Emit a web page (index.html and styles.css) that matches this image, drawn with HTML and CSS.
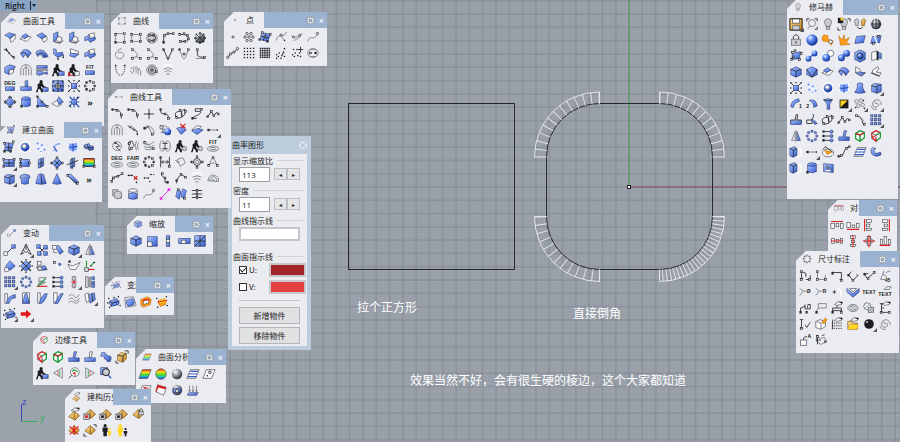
FILE: index.html
```
<!DOCTYPE html>
<html lang="zh-CN">
<head>
    <meta charset="UTF-8">
    <meta name="viewport" content="width=device-width, initial-scale=1.0">
    <title>Right</title>
    <link rel="stylesheet" href="styles.css">
</head>
<body>
    <main class="viewport">
        <svg class="drawing" aria-hidden="true">
            <defs>
                <pattern id="fine" x="629" y="187" width="2.66" height="2.66" patternUnits="userSpaceOnUse">
                    <path class="grid-fine" d="M0 0H2.66M0 0V2.66"/>
                </pattern>
                <pattern id="coarse" x="622.35" y="180.35" width="13.3" height="13.3" patternUnits="userSpaceOnUse">
                    <path class="grid-coarse" d="M0 6.65H13.3M6.65 0V13.3"/>
                </pattern>
                <linearGradient id="blue" x1="0" y1="0" x2="1" y2="1">
                    <stop offset="0" stop-color="#b4c8ff"/>
                    <stop offset="0.5" stop-color="#6c90ee"/>
                    <stop offset="1" stop-color="#3456be"/>
                </linearGradient>
                <radialGradient id="ball" cx="0.35" cy="0.3" r="0.7">
                    <stop offset="0" stop-color="#eef4ff"/>
                    <stop offset="0.4" stop-color="#5c8cf5"/>
                    <stop offset="1" stop-color="#123296"/>
                </radialGradient>
                <radialGradient id="steel" cx="0.35" cy="0.3" r="0.7">
                    <stop offset="0" stop-color="#ffffff"/>
                    <stop offset="0.5" stop-color="#9299a4"/>
                    <stop offset="1" stop-color="#30353d"/>
                </radialGradient>
                <linearGradient id="rainbow" x1="0" y1="0" x2="0" y2="1">
                    <stop offset="0" stop-color="#f02010"/>
                    <stop offset="0.3" stop-color="#ffe020"/>
                    <stop offset="0.55" stop-color="#58d820"/>
                    <stop offset="0.75" stop-color="#20c8b0"/>
                    <stop offset="1" stop-color="#2b3cff"/>
                </linearGradient>
                <linearGradient id="gold" x1="0" y1="0" x2="1" y2="1">
                    <stop offset="0" stop-color="#ffe49a"/>
                    <stop offset="1" stop-color="#c07a10"/>
                </linearGradient>
            </defs>
            <rect x="95" y="0" width="100%" height="100%" fill="url(#fine)"/>
            <rect x="95" y="0" width="100%" height="100%" fill="url(#coarse)"/>
            <path class="axis-x" d="M629 187H2000"/>
            <path class="axis-z" d="M629 187V0"/>
            <rect class="curve" x="348.5" y="103.5" width="166" height="166"/>
            <rect class="curve" x="546.5" y="103.5" width="166" height="166" rx="53"/>
            <!-- curvature combs, one per rounded corner -->
            <g class="comb">
                <path d="M599.5 103.5V92A65 65 0 0 0 534.5 157H546.5M659.5 103.5V92A65 65 0 0 1 724.5 157H712.5M546.5 216.5H534.5A65 65 0 0 0 599.5 281.5V269.5M712.5 216.5H724.5A65 65 0 0 1 659.5 281.5V269.5"/>
                <path class="hairs" pathLength="12" d="M599.5 98A59 59 0 0 0 540.5 157"/>
                <path class="hairs" pathLength="12" d="M659.5 98A59 59 0 0 1 718.5 157"/>
                <path class="hairs" pathLength="12" d="M540.5 216.5A59 59 0 0 0 599.5 275.5"/>
                <path class="hairs hairs-dense" pathLength="24" d="M718.5 216.5A59 59 0 0 1 659.5 275.5"/>
            </g>
            <rect class="origin" x="627.5" y="185.5" width="3" height="3"/>
            <path class="ucs-z" d="M21.5 421V404"/>
            <path class="ucs-y" d="M21 421.5H38"/>
            <text class="ucs-label ucs-z-label" x="22" y="405">z</text>
            <text class="ucs-label ucs-y-label" x="40" y="421">y</text>
        </svg>

        <button class="view-name" type="button">Right<span class="view-menu"></span></button>

        <p class="note note-square">拉个正方形</p>
        <p class="note note-fillet">直接倒角</p>
        <p class="note note-result">效果当然不好，会有很生硬的棱边，这个大家都知道</p>

        <form class="dialog">
            <header class="dialog-title">
                <h2>曲率图形</h2>
                <button class="dialog-close" type="button" aria-label="关闭">×</button>
            </header>
            <div class="dialog-body">
                <label class="group" for="scale">显示缩放比</label>
                <div class="row">
                    <input class="number" id="scale" type="text" value="113">
                    <span class="spin"><button type="button" aria-label="减少">◂</button><button type="button" aria-label="增加">▸</button></span>
                </div>
                <label class="group" for="density">密度</label>
                <div class="row">
                    <input class="number" id="density" type="text" value="11">
                    <span class="spin"><button type="button" aria-label="减少">◂</button><button type="button" aria-label="增加">▸</button></span>
                </div>
                <h3 class="group">曲线指示线</h3>
                <div class="row"><button class="swatch swatch-curve" type="button" aria-label="曲线颜色"></button></div>
                <h3 class="group group-surface">曲面指示线</h3>
                <div class="row row-check">
                    <label><input type="checkbox" checked>U:</label>
                    <button class="swatch swatch-u" type="button" aria-label="U 颜色"></button>
                </div>
                <div class="row row-check">
                    <label><input type="checkbox">V:</label>
                    <button class="swatch swatch-v" type="button" aria-label="V 颜色"></button>
                </div>
                <hr>
                <button class="command" type="button">新增物件</button>
                <button class="command" type="button">移除物件</button>
            </div>
        </form>

        <section class="panel" id="surface-tools" data-icon="extendS" data-title="曲面工具"
            data-tools="filletS extendS chamferS wallL wallL step blendC shell shell2 step2 wallStep step boxOpen arches waves personBar personRG fitBar degBar cutBlue personBar target netX ringNodes ringBlue cylinder triangle fold starBlue more"></section>
        <section class="panel" id="create-surface" data-icon="patch" data-title="建立曲面"
            data-tools="patch ring scatter strips sheet loft plane+ plane2 wallV diamond planeV hues roundBox+ drum trapezoid cone pipe more"></section>
        <section class="panel" id="curves" data-icon="square4" data-title="曲线"
            data-tools="square4 rect4 roundC bendC loopC globe spiral1 hookC hookC vee vee2 ell bowl helix spiral fan"></section>
        <section class="panel" id="points" data-icon="point" data-title="点"
            data-tools="point points gridBlue pointC pointC2 wavePt chainPt dots dots2 cloud cloud2 mask"></section>
        <section class="panel" id="curve-tools" data-icon="dashPt" data-title="曲线工具"
            data-tools="fillet fillet cross sCurve loops zigS zig arches fillet2 arcs balls redPatch bluePatch dashPt+ circleCut brain leaf rings personGray personGray fitRing degRing fairRing ringNodes barsIn rhomb target2 swing chainC redPts dashPts hookS fillet3 fan rainbow union drumBlue wavePt magenta sheets hatchL"></section>
        <section class="panel" id="transform" data-icon="move" data-title="变动"
            data-tools="move tripod+ copies rotate box+ mirror rhombB globeNet orient flow project axes arr+ ringNodesB stepRed flowR redBar+ columns bend taper shear shear2 wavy twist+ cage+ arrow+"></section>
        <section class="panel" id="scale-tools" data-icon="box" data-title="缩放"
            data-tools="box scale2 scale1 scaleH scaleFree"></section>
        <section class="panel" id="deform" data-icon="cage" data-title="变形"
            data-tools="cage cage2 cageGold cageGold2"></section>
        <section class="panel" id="edge-tools" data-icon="edgeRed" data-title="边缘工具"
            data-tools="edgeRed edgeGreen joinB joinL puzzle goldBox personBar triL lensG triR lensB"></section>
        <section class="panel" id="surface-analysis" data-icon="hueSheet" data-title="曲面分析"
            data-tools="hueSheet hueBall steelBall zebra pointSheet dotSheet redSheet camera thickness"></section>
        <section class="panel" id="history" data-icon="pyramidPin" data-title="建构历史"
            data-tools="pyramidPin pyramidRed pyramidDark pyramidDark pyramidLock pyramidX pyramid people people2"></section>
        <section class="panel" id="custom" data-icon="bulb" data-title="修马赫"
            data-tools="save+ zoomAll bulb bulbBlack bulbs globeGray lock sphere orangeP burst para paraPt paraCage twoBalls twoBallsD twoBallsB nutBlue boxWhite hex hexV extendS shell stepChair chairW netX scatter ring sheet bell roundBox+ arc1 arc2 funnel half+ cluster+ swirl+ joinBlk joinPen loops zig arcDash arr+ mirror ringNodesB flowR joinB edgeGreen edgeRed boxGhost dashPt+ gem curveS zebra hookB boxGhost cylinder plate"></section>
        <section class="panel" id="align" data-icon="alignT" data-title="对齐"
            data-tools="alignT alignB alignL alignR alignM alignC alignX alignD"></section>
        <section class="panel" id="dimension" data-icon="ringNodes" data-title="尺寸标注"
            data-tools="dimH dimV dimR dimA dimC dim45 dimD dimRad plusArc dimBlue textA textB dimN dimBox dimPin blob hatch dimPen dimTick cubePen listPin folder blackBall+ swirl boxA tagPin"></section>
    </main>
    <script src="panels.js"></script>
</body>
</html>
```
FILE: styles.css
```
* {
    box-sizing: border-box;
}

body {
    margin: 0;
    font-family: "Noto Sans CJK SC", "Open Sans", sans-serif;
    font-size: 8px;
    color: #1c1c1e;
}

button {
    font: inherit;
    color: inherit;
    padding: 0;
    border: 0;
    background: none;
}

.viewport {
    position: relative;
    min-height: 100vh;
    overflow: hidden;
    background: #9ba2ab;
}

/* drawing */
.drawing {
    position: absolute;
    inset: 0;
    width: 100%;
    height: 100%;
}

.grid-fine {
    stroke: #8c939c;
    stroke-width: 0.5;
    opacity: 0.6;
}

.grid-coarse {
    stroke: #7b838d;
    stroke-width: 0.8;
}

.axis-x {
    stroke: #8d4b52;
}

.axis-z {
    stroke: #4b9a52;
}

.curve {
    fill: none;
    stroke: #25282c;
}

.comb path {
    fill: none;
    stroke: #e2e5e8;
}

.comb .hairs {
    stroke-width: 12;
    stroke-dasharray: 0.12 0.88;
}

.comb .hairs-dense {
    stroke-dasharray: 0.24 0.76;
}

.origin {
    fill: #fff;
    stroke: #222;
}

.ucs-z {
    stroke: #3a50b8;
}

.ucs-y {
    stroke: #35b060;
}

.ucs-label {
    font: 9px "Open Sans", sans-serif;
}

.ucs-z-label {
    fill: #2840c0;
}

.ucs-y-label {
    fill: #28b058;
}

.view-name {
    position: absolute;
    left: 0;
    top: 0;
    display: flex;
    align-items: center;
    height: 11px;
    padding: 0 1px 0 5px;
    background: #88a5c5;
    font: 600 8px "Open Sans", sans-serif;
}

.view-menu {
    margin-left: 5px;
    padding-left: 1px;
    border-left: 1px solid #222;
    height: 9px;
    display: flex;
    align-items: center;
}

.view-menu::after {
    content: "";
    border: 2px solid transparent;
    border-top: 3px solid #222;
    border-bottom: 0;
}

.note {
    position: absolute;
    margin: 0;
    font-size: 12px;
    line-height: 16px;
    color: #fff;
    white-space: nowrap;
}

.note-square {
    left: 357px;
    top: 299px;
}

.note-fillet {
    left: 573px;
    top: 305px;
}

.note-result {
    left: 410px;
    top: 372px;
}

/* curvature dialog */
.dialog {
    position: absolute;
    left: 228px;
    top: 136px;
    width: 83px;
    padding: 0 4px 4px;
    background: #bdccdc;
    line-height: 10px;
}

.dialog-title {
    display: flex;
    align-items: center;
    justify-content: space-between;
    height: 18px;
}

.dialog-title h2 {
    margin: 0;
    font-size: 8px;
    font-weight: 400;
}

.dialog-close {
    width: 8px;
    height: 8px;
    border-radius: 50%;
    background: #dce4ec;
    color: #94a6ba;
    line-height: 6px;
}

.dialog-body {
    display: flex;
    flex-direction: column;
    padding: 1px 0 2px;
    background: #ebecf0;
}

.group {
    display: flex;
    align-items: center;
    gap: 4px;
    height: 11px;
    margin: 0 4px 0 1px;
    font-size: 8px;
    font-weight: 400;
    white-space: nowrap;
}

.group::after {
    content: "";
    flex: 1;
    border-top: 1px solid #d0d2d6;
}

.group-surface {
    margin-top: 6px;
}

.row {
    display: flex;
    align-items: center;
    justify-content: space-between;
    height: 16px;
    margin: 0 7px 3px;
}

.row-check {
    margin: 0 1px 1px 7px;
}

.row-check label {
    display: flex;
    align-items: center;
    gap: 2px;
}

.row-check input {
    appearance: none;
    width: 8px;
    height: 8px;
    margin: 0;
    border: 1px solid #333;
    background: #fff;
}

.row-check input:checked::after {
    content: "";
    display: block;
    width: 5px;
    height: 3px;
    border: solid #333;
    border-width: 0 0 1px 1px;
    transform: rotate(-45deg);
}

.number {
    width: 31px;
    height: 15px;
    padding: 0 2px;
    border: 1px solid #9c9ea3;
    background: #fff;
    font: 8px "Open Sans", sans-serif;
    color: #222;
}

.spin {
    display: flex;
}

.spin button {
    width: 13px;
    height: 12px;
    border: 1px solid #bdbfc3;
    background: #e4e5e7;
    font: 6px "DejaVu Sans", sans-serif;
}

.swatch {
    height: 14px;
    border: 2px solid #c4c6ca;
}

.swatch-curve {
    flex: 1;
    background: #fff;
}

.swatch-u {
    width: 37px;
    background: #a02428;
}

.swatch-v {
    width: 37px;
    background: #e44042;
}

.dialog hr {
    align-self: stretch;
    margin: 4px 7px 6px;
    border: 0;
    border-top: 1px solid #c4c6ca;
}

.command {
    height: 17px;
    margin: 0 7px 3px;
    border: 1px solid #b4b6b9;
    background: #e1e1e1;
}

.command:last-child {
    margin-bottom: 0;
}

/* tool panels */
.panel {
    position: absolute;
    background: #ebecf1;
    clip-path: polygon(10px 0, 100% 0, 100% 100%, 0 100%, 0 10px);
}

.panel-head {
    display: flex;
    height: 16px;
}

.panel-tab {
    display: flex;
    align-items: center;
    gap: 6px;
    min-width: 0;
    overflow: hidden;
    padding: 0 10px 0 6px;
    background: #ebecf1;
}

.panel-tab svg {
    flex: none;
    width: 10px;
    height: 10px;
    opacity: 0.7;
}

.panel-tab h2 {
    margin: 0;
    font-size: 8px;
    font-weight: 400;
    line-height: 12px;
    white-space: nowrap;
}

.panel-actions {
    flex: 1 0 38px;
    display: flex;
    align-items: center;
    justify-content: flex-end;
    gap: 4px;
    padding-right: 3px;
    background: #9bb3d1;
    color: #f2f5f9;
}

.panel-actions button {
    display: flex;
    justify-content: center;
    align-items: center;
    height: 9px;
    font: bold 9px "Open Sans", sans-serif;
}

.gear {
    width: 9px;
    height: 9px;
}

.gear path {
    fill: #eceded;
    stroke: #7c8188;
    stroke-width: 0.8;
}

.panel-tools {
    display: grid;
    grid-template-columns: repeat(auto-fill, 16px);
    padding: 1px 0 0 1px;
}

.tool {
    position: relative;
    width: 16px;
    height: 16px;
    padding: 1px;
}

.tool svg {
    display: block;
    width: 14px;
    height: 14px;
}

.tool-menu::after {
    content: "";
    position: absolute;
    right: 0;
    bottom: 0;
    border: 2px solid #555;
    border-top-color: transparent;
    border-left-color: transparent;
}

.tool-more {
    padding: 0;
    font: bold 9px "Open Sans", sans-serif;
}

#surface-tools { left: 1px; top: 13px; width: 103px; height: 113px; }
#create-surface { left: 0; top: 122px; width: 102px; height: 80px; }
#curves { left: 111px; top: 13px; width: 102px; height: 70px; }
#points { left: 224px; top: 12px; width: 103px; height: 54px; }
#curve-tools { left: 108px; top: 89px; width: 123px; height: 119px; }
#transform { left: 1px; top: 225px; width: 103px; height: 103px; }
#scale-tools { left: 127px; top: 216px; width: 86px; height: 38px; }
#deform { left: 105px; top: 277px; width: 69px; height: 38px; }
#edge-tools { left: 33px; top: 332px; width: 102px; height: 53px; }
#surface-analysis { left: 136px; top: 349px; width: 90px; height: 54px; }
#history { left: 65px; top: 389px; width: 86px; height: 56px; }
#custom { right: 2px; top: -1px; width: 111px; height: 200px; }
#align { right: 3px; top: 200px; width: 69px; height: 52px; }
#dimension { right: 1px; top: 251px; width: 103px; height: 102px; }

/* icon strokes and fills */
.k, .g, .r, .e, .u, .lt {
    fill: none;
    stroke: #2c2e33;
    stroke-width: 1;
}

.g { stroke: #7b7f86; }
.r { stroke: #dd1f1f; stroke-width: 1.3; }
.e { stroke: #17a035; stroke-width: 1.3; }
.u { stroke: #3458bd; stroke-width: 1.4; }
.lt { stroke: #fff; stroke-width: 1.5; }

.b, .w, .gold, .n, .s, .hue {
    fill: url(#blue);
    stroke: #2a3a70;
    stroke-width: 0.7;
}

.w { fill: #f8f9fb; stroke: #3c3f46; }
.n { fill: #d8dade; stroke: #202226; }
.s { fill: #c9cbd0; stroke: #55585e; }
.gold { fill: url(#gold); stroke: #7a5010; }
.hue { fill: url(#rainbow); stroke: #444; }
.f { fill: #1c1d20; }
.fr { fill: #e01818; }
.fo { fill: #ff9c18; stroke: #a05c00; stroke-width: 0.5; }
.fy { fill: #ffd81c; }
.ball { fill: url(#ball); }
.steel { fill: url(#steel); }
.halo { fill: #7fa3f5; stroke: #fff; stroke-width: 1; }
.dash { stroke-dasharray: 1.5 1; }

.t {
    font: bold 6px "Liberation Sans", sans-serif;
    text-anchor: middle;
    fill: #1c1d20;
}
```
FILE: panels.js
```
const p = (c, d) => `<path class="${c}" d="${d}"/>`;
const c = (cls, x, y, r) => `<circle class="${cls}" cx="${x}" cy="${y}" r="${r}"/>`;
const r = (cls, x, y, w, h) => `<rect class="${cls}" x="${x}" y="${y}" width="${w}" height="${h}"/>`;
const e = (cls, x, y, rx, ry) => `<ellipse class="${cls}" cx="${x}" cy="${y}" rx="${rx}" ry="${ry}"/>`;
const t = (s, x, y) => `<text class="t" x="${x}" y="${y}">${s}</text>`;
// pairs of x,y -> small control point squares
const n = (...a) => { let s = ''; for (let i = 0; i < a.length; i += 2) s += r('n', a[i] - 1, a[i + 1] - 1, 2, 2); return s; };
const f = (...a) => { let s = ''; for (let i = 0; i < a.length; i += 2) s += c('f', a[i], a[i + 1], 0.9); return s; };
const circleOf = (draw, count, rad) => {
    let s = '';
    for (let i = 0; i < count; i++) {
        const a = i * 2 * Math.PI / count;
        s += draw(8 + rad * Math.cos(a), 8 + rad * Math.sin(a));
    }
    return s;
};
const grid = (draw, cols, rows, x, y, step) => {
    let s = '';
    for (let i = 0; i < cols; i++) for (let j = 0; j < rows; j++) s += draw(x + i * step, y + j * step);
    return s;
};

const person = c('f', 7, 3, 1.8) + p('f', 'M3 6L6 4L9 5L10 8L13 9V10H9L7 8V10L9 12V15H7L6 12L4 11L3 15H1L3 10Z');
const bar = r('b', 3, 9, 10, 4);
const ripples = e('g', 8, 11, 6.5, 3) + e('g', 8, 11, 3.5, 1.3);
const pyramid = p('gold', 'M2 9L8 3L14 8L9 13Z') + p('gold', 'M8 3L9 13L14 8Z');
const box = p('b', 'M2 5L8 2L14 5V11L8 14L2 11Z') + p('k', 'M2 5L8 7L14 5M8 7V14');
const cage = p('b', 'M3 7L11 4L14 8L13 11L5 13L3 10Z') + p('k', 'M3 7L6 9L14 7M6 9L5 13') + f(2, 4, 13, 2, 15, 12, 3, 14, 8, 3, 1, 9);
const sheet = 'M5 3H15L11 13H1Z';
const bulb = p('s', 'M8 2C4 2 3 6 5 9L6 11H10L11 9C13 6 12 2 8 2Z') + r('s', 6, 11, 4, 3);
const pin = p('w', 'M5 4L9 1H14L13 4L8 5Z') + p('f', 'M10 1H14V3Z');
const edgeBox = 'M3 5L8 2L13 4V10L8 14L3 11ZM3 5L8 7L13 4M8 7V14';

const icons = {
    // surfaces
    filletS: p('b', 'M2 5L7 2L14 4L10 7L8 9Q6 6 2 5') + p('w', 'M8 9L14 4V9L9 13Z'),
    extendS: p('w', 'M1 9L8 5L14 7L9 12Z') + p('b', 'M3 6L8 3L11 6L6 9Z'),
    chamferS: p('b', 'M2 5L8 2L13 6L8 9Z') + p('w', 'M8 9L13 6L14 10L10 13Z'),
    wallL: p('b', 'M3 3L8 1V9L3 12Z') + p('w', 'M8 6L13 8L10 13L6 10Z') + p('k', 'M3 12L10 14L14 11'),
    step: p('w', 'M6 4L13 2V7L8 9V6Z') + p('b', 'M2 7L7 5V9L14 7V10L8 13L6 10L2 11Z'),
    step2: p('b', 'M3 2L6 3V7L13 6L14 9L8 12L3 8Z') + p('k', 'M8 12V14M14 9V12') + f(14, 12, 8, 14),
    wallStep: p('w', 'M4 2L13 5V9L4 7Z') + p('b', 'M4 7L13 8L9 12L3 10Z'),
    blendC: p('k', 'M1 3Q5 3 7 7T14 12M3 1L6 6M9 9L13 14') + f(4, 3, 7, 7, 12, 11),
    shell: p('b', 'M2 8C3 2 10 1 14 7L10 12C9 8 7 7 5 12Z') + p('k', 'M2 8Q7 3 10 12'),
    shell2: p('b', 'M1 6C6 1 12 4 15 11L9 12C8 8 5 8 3 11Z') + p('k', 'M2 9Q9 3 12 12'),
    boxOpen: p('b', 'M2 5L8 2L14 4L12 8L7 8V13L2 11Z') + p('w', 'M7 8L12 7V11L7 13Z'),
    arches: p('g', 'M2 14V7Q3 2 8 2T14 7V14M5 14V7Q6 5 8 5T11 7V14M8 2V14'),
    waves: p('b', 'M2 3H14V6H2Z') + p('k', 'M1 8H15') + p('b', 'M2 10Q5 8 8 10T14 10V13Q11 11 8 13T2 13Z'),
    personBar: person + r('b', 9, 10, 6, 4),
    personRG: person + p('r', 'M2 10V14H7') + r('w', 9, 10, 5, 4),
    fitBar: t('FIT', 8, 7) + bar,
    degBar: t('DEG', 8, 7) + bar,
    cutBlue: p('b', 'M7 2H10V9H7Z') + r('b', 2, 9, 12, 4),
    target: r('b', 2, 2, 12, 12) + c('n', 8, 8, 3) + p('k', 'M8 1V15M1 8H15') + f(3, 3, 13, 3, 3, 13, 13, 13),
    netX: p('k', 'M2 2L14 14M14 2L2 14') + r('b', 5, 5, 6, 6) + f(2, 2, 14, 2, 2, 14, 14, 14, 8, 2, 8, 14, 2, 8, 14, 8),
    ringNodes: circleOf((x, y) => n(x, y), 8, 5.5),
    ringBlue: c('b', 8, 8, 4) + p('k', 'M8 1L10 3H6ZM8 15L10 13H6ZM1 8L3 6V10ZM15 8L13 6V10Z'),
    cylinder: p('b', 'M3 4V12Q8 15 13 12V4') + e('b', 8, 4, 5, 2) + n(3, 13),
    triangle: p('b', 'M3 2L14 13H3Z') + n(3, 2, 3, 13, 14, 13, 8, 8),
    fold: p('w', 'M1 10L7 6L12 11L7 13Z') + p('b', 'M7 6L9 2L14 8L9 11Z'),
    starBlue: p('u', 'M3 2L14 14M14 2L2 13M8 2V14M2 8H14') + c('b', 8, 8, 3) + f(12, 3, 4, 13),
    patch: p('b', 'M4 3L13 4L10 13L3 12Z') + p('k', 'M8 3L7 13M4 8L12 9') + n(3, 4, 13, 2, 10, 13, 3, 13),
    ring: c('lt', 8, 8, 6) + c('ball', 8, 8, 5) + c('w', 7, 7, 2.5),
    scatter: c('halo', 4, 4, 2) + c('halo', 9, 6, 2) + c('halo', 5, 10, 2) + c('halo', 12, 11, 2) + c('halo', 8, 13, 1.5),
    strips: p('halo', 'M4 7Q7 2 13 3L12 6Q8 5 6 8ZM2 12Q6 9 9 11L8 14Q5 12 3 14Z') + p('u', 'M4 7L8 13'),
    sheet: p('halo', 'M3 3Q8 5 13 2V12Q8 14 3 12Z') + p('u', 'M3 8Q8 9 13 7M8 4V13'),
    loft: p('b', 'M2 6L8 4L10 7L13 7V11L9 12L6 10L4 10Z') + p('k', 'M6 5L9 12M2 8L13 9'),
    plane: p('b', 'M2 4H14V12H2Z') + p('k', 'M2 8H14M8 4V12') + n(2, 4, 14, 4, 2, 12),
    plane2: p('b', 'M3 4H13V12H3Z') + n(3, 4, 13, 8, 3, 12, 3, 8),
    wallV: p('b', 'M5 4L11 2V11L5 14Z') + p('k', 'M8 3V13M5 9L11 7'),
    diamond: p('b', 'M8 2L14 8L8 14L2 8Z') + p('k', 'M5 5L11 11M11 5L5 11') + n(8, 2, 14, 8, 8, 14, 2, 8),
    planeV: p('b', 'M5 4L10 2V12L5 14Z') + p('k', 'M1 10L14 5M7 2V15'),
    hues: '<rect x="2" y="3" width="12" height="9" fill="url(#rainbow)" stroke="#333"/>' + n(2, 12, 14, 12),
    roundBox: p('b', 'M3 5Q5 2 9 3L14 4V12L9 14L3 12Z') + p('k', 'M9 6V14M3 5Q6 8 9 6L14 4'),
    drum: p('b', 'M3 4Q8 1 13 4Q15 6 12 8V13Q8 15 4 13V9Q1 6 3 4Z') + p('g', 'M4 6Q8 8 12 6'),
    trapezoid: p('b', 'M5 3Q8 1 11 3L14 13Q8 15 2 13Z') + p('k', 'M8 3L9 14'),
    cone: p('b', 'M8 2L13 13Q8 15 3 13Z'),
    pipe: p('b', 'M2 4L5 2L14 11L12 14Z') + p('k', 'M3 5L12 13') + n(2, 4, 13, 13),
    para: p('b', 'M4 4L14 3L12 11L2 12Z'),
    paraPt: p('b', 'M4 4L14 3L12 11L2 12Z') + p('lt', 'M6 2L10 14') + n(5, 12, 11, 4),
    paraCage: p('b', 'M4 5L13 3L12 11L3 12Z') + n(4, 4, 7, 2, 14, 5, 12, 12, 3, 12, 5, 9),
    hex: box,
    hexV: p('b', 'M2 5L8 2L14 5V11L8 14L2 11Z') + p('k', 'M2 5L8 14L14 5'),
    bell: p('b', 'M5 3Q8 1 11 3V8L14 13Q8 15 2 13L5 8Z'),
    stepChair: p('w', 'M3 2L8 5V8L14 9L10 13L3 9Z') + p('b', 'M4 8L14 9L10 12L3 9Z'),
    chairW: p('w', 'M10 2L4 6V9L12 12L14 9L8 8L11 5Z') + p('k', 'M2 9L12 13'),
    nutBlue: p('b', 'M8 1L14 4V12L8 15L2 12V4Z') + c('ball', 8, 8, 3) + c('k', 8, 8, 3.5),
    boxWhite: p('w', 'M3 4L9 2V12L3 13Z') + p('f', 'M9 2L11 3V13L9 12Z') + p('b', 'M11 4L14 5V11L11 10Z'),
    boxGhost: p('lt', 'M10 4L14 5V12L10 13') + p('b', 'M1 4L6 2L9 4V12L4 14L1 12Z') + p('k', 'M1 4L5 6L9 4M5 6V14'),
    gem: e('w', 8, 9, 6.5, 4.5) + p('k', 'M2 5L5 2L13 8') + p('fo', 'M4 6L13 8L7 11Z'),
    hookB: p('b', 'M4 3Q1 5 3 10Q7 15 14 11L13 8Q8 11 6 8T8 4Z'),
    plate: p('b', 'M3 3L14 4V13L3 12Z') + c('n', 7, 7, 1.3) + c('n', 10, 9, 1.3) + p('lt', 'M5 11H11'),
    funnel: p('b', 'M3 3Q8 1 13 3L10 8V14H7V8Z') + p('k', 'M3 3Q8 6 13 3'),
    arc1: p('b', 'M2 11Q3 3 11 2L12 5Q6 6 5 12Z') + t('1', 13, 13),
    arc2: p('b', 'M5 4Q12 1 14 10L10 12Q10 6 5 4') + t('2', 3, 13),

    // curves
    square4: p('g', 'M3 3H13M13 5V13M3 13H12M3 3V11') + n(3, 4, 13, 3, 3, 13, 13, 13),
    rect4: p('g', 'M3 4H13V12H3Z') + n(3, 4, 13, 4, 3, 12, 13, 12),
    roundC: c('s', 8, 8, 6) + p('k', 'M5 5H9Q12 5 12 8T9 11H5') + n(5, 5, 10, 5, 5, 11, 10, 11),
    bendC: p('k', 'M3 14V9Q3 4 8 3H14') + n(3, 13, 4, 5, 8, 3, 14, 3),
    loopC: p('k', 'M3 12H11Q14 11 13 7Q12 4 7 4H3') + n(3, 4, 8, 3, 12, 5, 13, 9, 9, 12, 4, 12),
    globe: c('steel', 8, 8, 6) + p('k', 'M2 8H14M8 2V14M4 4L12 12M12 4L4 12') + circleOf((x, y) => f(x, y), 8, 6),
    spiral1: p('g', 'M10 2Q6 2 6 5M6 5Q2 6 3 10Q5 15 10 13Q14 10 11 7Q8 5 6 7'),
    hookC: p('g', 'M4 3L8 6Q11 10 8 11L3 13M8 11L13 13') + n(4, 3, 4, 13, 13, 13),
    vee: p('k', 'M3 3L8 14L13 3') + n(3, 3, 8, 13, 13, 3),
    vee2: p('g', 'M3 3Q7 14 8 14T13 3') + n(3, 3, 8, 8, 13, 3),
    ell: p('k', 'M5 2V9Q6 12 14 12') + p('g', 'M3 13H14') + n(5, 3, 13, 12),
    bowl: p('k dash', 'M3 2Q3 13 8 14T14 2') + f(3, 3, 13, 3),
    helix: p('g', 'M2 6Q6 4 5 10M5 4Q9 5 8 11M8 4Q12 6 10 13M11 6Q15 9 13 14M1 9L5 12'),
    spiral: c('g', 8, 8, 6) + c('k', 8, 8, 4) + c('g', 8, 8, 2) + n(8, 8, 13, 10),
    fan: p('lt', 'M2 4Q8 0 14 4') + p('g', 'M3 7Q8 4 13 7M4 10Q8 7 12 10M6 13Q8 11 10 13'),
    fillet: p('k', 'M2 3H8Q13 4 13 13') + n(3, 3, 8, 4, 13, 9),
    fillet2: p('k', 'M2 3L8 7Q13 8 13 13') + p('g', 'M5 2L13 10') + f(5, 5, 9, 8, 13, 13),
    fillet3: p('k', 'M3 14Q3 7 9 4L14 8') + n(3, 11, 8, 4, 13, 7),
    arcs: p('g', 'M2 5Q9 2 11 13M5 3Q13 4 14 12') + p('k', 'M3 7L8 4') + n(3, 6, 12, 13),
    arcDash: p('g dash', 'M3 3Q10 3 13 11') + p('k', 'M4 3Q11 5 11 12') + n(4, 3, 13, 13),
    cross: p('k', 'M8 2V14M2 8H14') + f(8, 8),
    sCurve: p('k', 'M3 2V6Q4 8 8 8T12 13H14') + n(3, 3, 8, 8, 12, 13),
    loops: p('k', 'M2 11Q0 6 5 5T9 11Q7 5 11 3T12 9Q9 13 3 13') + n(3, 12, 7, 4, 13, 5),
    zigS: p('k', 'M14 2H6V5H12Q13 8 7 10L2 13H8') + n(13, 3, 3, 13),
    zig: p('k', 'M2 11L6 5L9 10L12 6L14 8') + n(2, 11, 6, 5, 9, 10, 14, 8),
    balls: p('g', 'M2 3Q8 2 13 6M3 11H8') + c('n', 4, 5, 2) + c('n', 7, 9, 2) + c('ball', 11, 10, 4),
    redPatch: p('b', 'M3 6L10 4L14 8L8 13Z') + p('r', 'M7 1L13 6M13 1L8 6'),
    bluePatch: p('w', 'M2 8L8 3L13 4L9 8Z') + p('b', 'M2 9L9 6L15 8L8 13Z'),
    dashPt: p('k dash', 'M2 8H14') + n(3, 8) + f(13, 8),
    circleCut: c('g', 8, 8, 5) + p('k', 'M5 3L11 8L7 9L12 14') + f(6, 5),
    brain: p('k', 'M4 3Q8 1 8 5Q11 7 8 9T4 13Q2 10 4 8Q1 5 4 3') + p('g', 'M12 2Q9 7 12 13M14 4Q12 8 14 12') + n(4, 5, 6, 11),
    leaf: p('g', 'M2 5Q7 9 14 3M2 8Q8 12 14 7M3 11Q9 14 14 10M4 3L12 12') + n(3, 4, 13, 11),
    rings: e('g', 5, 8, 3, 6) + e('g', 11, 8, 3, 6) + p('k', 'M5 5H11M5 11H11'),
    personGray: person + c('s', 12, 11, 2.5),
    fitRing: t('FIT', 8, 6) + ripples,
    degRing: t('DEG', 8, 6) + ripples,
    fairRing: t('FAIR', 8, 6) + ripples,
    barsIn: p('k', 'M3 2V14M13 2V14M4 8H12M6 6L4 8L6 10M10 6L12 8L10 10') + n(3, 3, 13, 13),
    rhomb: p('g', 'M4 5L10 3L13 9L7 13Z') + p('k', 'M2 6L5 9'),
    target2: c('k', 8, 8, 4) + c('g', 8, 8, 2) + n(8, 2, 8, 14, 2, 8, 14, 8),
    swing: p('g', 'M8 2L3 12M8 2L13 12M3 12Q8 6 13 12') + n(8, 3, 3, 12, 13, 12),
    chainC: p('k', 'M2 12L4 7L9 6L14 3') + n(2, 12, 4, 8, 9, 6, 14, 3),
    redPts: p('k', 'M2 5H7') + f(3, 5, 7, 5, 12, 13) + p('r', 'M9 6L13 10M13 6L9 10'),
    dashPts: p('k dash', 'M2 8H8M10 4H15') + f(3, 8, 7, 8, 9, 12, 10, 4),
    hookS: p('k', 'M4 2V5L8 8V13H12') + n(5, 3, 8, 8, 11, 13),
    rainbow: p('g', 'M2 11Q4 3 10 5T14 12M4 11Q6 5 10 7T12 12M6 11Q8 7 10 12M2 11L14 12'),
    union: p('s', 'M3 3H9V7H13V13H8L6 10H3Z') + c('s', 9, 9, 4.5),
    drumBlue: e('w', 8, 4, 5, 2) + p('b', 'M3 8Q8 5 13 8V13Q8 15 3 13Z') + p('g', 'M3 4V13M13 4V13'),
    magenta: p('g', 'M3 13L13 3') + '<path stroke="#f030e8" stroke-width="3" d="M2 13H5M11 3H14"/><path stroke="#f030e8" d="M3 13L13 3"/>',
    sheets: p('b', 'M4 3L8 5L6 14L2 11Z') + p('b', 'M10 2L14 4L12 13L8 11Z') + n(5, 3, 12, 13),
    hatchL: p('k', 'M2 4H14M2 8H14M2 12H14M8 2V14') + n(8, 4, 8, 8, 8, 12),
    curveS: p('k', 'M2 13Q6 14 8 8T14 3') + n(2, 13, 5, 12, 11, 4, 14, 2),

    // points
    point: c('n', 8, 8, 1.3),
    points: circleOf((x, y) => c('n', x, y, 1.4), 6, 4.5) + c('n', 8, 8, 1.4),
    gridBlue: p('b', 'M5 3L14 5L11 13L2 11Z') + p('k', 'M9 4L6 12M3 7L13 9') + n(5, 3, 14, 5, 11, 13, 2, 11, 8, 8),
    pointC: p('g', 'M2 12Q5 5 9 6T14 2M8 6L12 12') + c('n', 8, 6, 1.3) + f(12, 12),
    pointC2: p('g', 'M2 6Q5 12 14 4M4 12Q11 10 13 5') + c('n', 4, 8, 1.2) + c('n', 11, 6, 1.2),
    wavePt: p('g', 'M2 13Q3 8 7 9T14 3') + c('n', 13, 4, 1.3),
    chainPt: p('k', 'M2 14L5 9L9 7L14 3') + c('n', 2, 13, 1.4) + c('n', 5, 9, 1.4) + c('n', 9, 7, 1.4) + c('n', 13, 3, 1.4),
    dots: grid((x, y) => r('f', x, y, 1.5, 1.5), 4, 4, 2, 2, 3.5),
    dots2: grid((x, y) => r('f', x, y, 1.8, 1.8), 5, 5, 2, 2, 2.5),
    cloud: f(3, 10, 5, 12, 6, 8, 9, 11, 11, 7, 12, 12, 3, 14, 8, 14, 10, 9, 12, 3),
    cloud2: f(3, 10, 5, 12, 6, 8, 9, 11, 11, 8, 12, 12, 4, 4, 8, 4, 12, 4) + p('k', 'M12 1V7M9 4H15'),
    mask: e('g', 8, 8, 6, 5) + n(5, 8, 11, 8) + p('g', 'M4 4H12M4 12H12'),
    cluster: c('g', 4, 5, 2) + c('g', 9, 4, 2) + c('g', 6, 10, 2) + c('g', 11, 9, 2) + f(3, 12, 12, 4, 13, 13),
    swirl: p('g', 'M8 8Q10 6 11 8T8 12Q4 12 4 8T9 3Q14 4 14 9M8 8Q6 7 7 5M2 10Q4 15 9 14'),

    // transform
    move: p('k', 'M4 12L12 4') + r('w', 1, 10, 4, 4) + r('b', 10, 2, 4, 4),
    tripod: p('k', 'M8 2L2 13L6 11M8 2L14 13L10 11M8 2V8M5 8L8 11L11 8') + n(8, 3),
    copies: p('k', 'M4 4L12 12M12 4L4 12') + r('b', 2, 2, 4, 4) + r('b', 10, 3, 4, 4) + r('b', 3, 10, 4, 4) + r('b', 10, 10, 4, 4),
    rotate: r('w', 2, 3, 5, 4) + p('b', 'M6 5L9 3L14 10L10 13Z') + p('g', 'M3 7V11H7'),
    box: box,
    mirror: p('g', 'M7 3V13H3Z') + p('b', 'M9 3V13H13Z') + p('g', 'M8 1V15'),
    rhombB: p('b', 'M8 2L14 8L8 13L3 8Z') + r('w', 2, 10, 4, 4),
    globeNet: c('b', 8, 8, 5) + p('k', 'M3 3L13 13M13 3L3 13') + f(3, 3, 13, 3, 3, 13, 13, 13, 8, 1, 8, 15, 1, 8, 15, 8),
    orient: p('k', 'M2 9L9 9L14 12L4 13Z') + r('w', 3, 3, 4, 4) + c('b', 10, 10, 2.5),
    flow: p('lt', 'M2 4Q8 5 8 14M12 2Q10 8 14 13') + n(4, 4) + c('b', 10, 6, 1.5),
    project: p('w', 'M1 6L6 8L15 4L10 12H4Z') + n(3, 3),
    axes: p('e', 'M4 2V9') + p('r', 'M4 12H13') + r('n', 2, 10, 4, 4) + p('e', 'M9 8L13 3') + f(13, 4, 9, 8),
    arr: grid((x, y) => r('b', x, y, 2.5, 2.5), 3, 3, 2, 2, 4.5),
    ringNodesB: circleOf((x, y) => c('b', x, y, 1.3), 8, 5.5),
    stepRed: p('g', 'M5 3H13L9 7H4Z') + p('s', 'M5 8H12L8 11H4Z') + p('r', 'M2 13H14') + p('e', 'M3 13L12 4'),
    flowR: p('k', 'M3 3H12M3 8H12M3 13H12') + n(3, 3, 3, 8, 3, 13) + c('b', 12, 3, 1.8) + c('b', 12, 8, 1.8) + c('b', 12, 13, 1.8),
    redBar: p('r', 'M8 1V15') + p('s', 'M6 2H10V6H6ZM6 10H10V14H6Z') + p('r', 'M5 8H11'),
    columns: r('s', 3, 2, 3, 12) + r('b', 10, 2, 3, 3) + r('b', 10, 7, 3, 3) + r('b', 10, 11, 3, 3) + p('k', 'M8 2V14'),
    bend: p('w', 'M2 3H5V14H2Z') + p('b', 'M4 14Q4 6 14 4L14 8Q8 8 7 14Z'),
    taper: p('w', 'M4 2H12V14H4Z') + p('b', 'M7 3H9L12 14H4Z'),
    shear: p('w', 'M3 2H6V14H3Z') + p('b', 'M5 14Q5 9 11 3H14Q13 9 8 14Z'),
    shear2: p('w', 'M3 2H7V14H3Z') + p('b', 'M4 14L11 3H14L8 14Z'),
    wavy: p('g', 'M2 6Q5 2 8 6T14 4M2 10Q5 6 8 10T14 8M2 13Q5 10 8 13T14 11'),
    twist: p('w', 'M2 4L6 2L7 12L4 13Z') + p('b', 'M7 4L13 2L14 10L8 14Z') + p('k', 'M10 3L11 12'),
    cage,
    cage2: p('g', 'M2 3L12 2L15 12L3 14Z') + p('b', 'M4 6L11 4L13 8L12 11L6 13L4 10Z'),
    cageGold: p('fo', 'M2 5L10 2L14 5L13 11L5 14L2 12Z') + p('w', 'M5 7L11 5V9L5 11Z') + p('r', 'M4 6L12 5'),
    cageGold2: p('fo', 'M4 6L11 4L13 8L12 11L6 13L4 10Z') + p('fy', 'M4 6L11 4L13 8L6 9Z') + p('r', 'M3 8L14 6') + f(2, 4, 13, 2, 14, 12, 3, 14),
    arrow: p('fr', 'M2 6H8V3L14 8L8 13V10H2Z'),
    scale2: p('b', 'M3 3H14V14H3Z') + r('w', 3, 9, 5, 5),
    scale1: r('b', 6, 2, 4, 4) + r('w', 6, 6, 4, 4) + r('b', 6, 10, 4, 4),
    scaleH: r('b', 2, 5, 13, 6) + r('w', 5, 7, 5, 4),
    scaleFree: r('b', 2, 2, 12, 12) + p('k', 'M2 14L14 2M8 2V14M2 8H14'),

    // edges and analysis
    edgeRed: p('w', edgeBox) + p('e', 'M8 7L13 4V10L8 14') + p('r', 'M8 7L4 10L3 5L8 2L12 4M4 10L8 14V10'),
    edgeGreen: p('w', edgeBox) + p('e', edgeBox) + p('r', 'M3 5L8 7L13 4'),
    joinB: p('b', 'M8 2H11L9 9H14V13H2V9H7Z'),
    joinL: p('w', 'M8 2H11L9 9H7Z') + r('b', 2, 9, 12, 4),
    joinBlk: p('k', 'M8 2H10L9 8H14V12H2V8H7Z') + r('b', 2, 9, 12, 4),
    joinPen: p('k', 'M9 1L10 3L8 8M2 8H8V12H2Z') + p('b', 'M7 7L10 8L14 12L11 13Z'),
    puzzle: p('b', 'M3 3H7Q6 6 9 5L10 7Q14 6 14 9L13 13H9V11L6 10L6 7H2Z'),
    goldBox: p('gold', 'M3 6L7 3L13 4V10L9 14L3 12Z') + p('k', 'M3 6L9 7L13 4M9 7V14M11 1H15V4M1 12V15H4'),
    triL: p('g', 'M13 2L3 8L13 14Z') + p('e dash', 'M10 5V12') + p('r dash', 'M8 6V10'),
    triR: p('g', 'M3 2L13 8L3 14Z') + p('e dash', 'M6 5V12') + p('r dash', 'M8 6V10'),
    lensG: p('k', 'M6 10L2 14') + c('w', 9, 7, 5) + p('e', 'M6 6Q9 3 12 7') + p('r', 'M7 9Q10 5 9 11'),
    lensB: r('b', 2, 2, 8, 8) + c('s', 8, 7, 4) + p('u', 'M10 10L14 14') + c('k', 8, 7, 4),
    hueSheet: p('hue', sheet),
    hueBall: c('hue', 8, 8, 6),
    steelBall: c('steel', 8, 8, 6),
    zebra: p('w', sheet) + p('u', 'M5 5H14M3 8H13M2 11H12'),
    pointSheet: p('w', sheet) + c('k', 9, 6, 1.5) + f(6, 10),
    dotSheet: p('w', sheet) + p('r', 'M6 5L12 6M4 9L10 10') + f(8, 7),
    redSheet: p('w', 'M4 2L14 5L11 14L2 10Z') + p('fr', 'M4 2L14 5L13 7L5 5L3 10L2 10Z'),
    camera: c('steel', 8, 8, 6) + r('b', 4, 6, 8, 5) + c('n', 8, 9, 2),
    thickness: p('g', 'M4 3V10M8 3V10M12 3V10M3 8L4 10L5 8M7 8L8 10L9 8M11 8L12 10L13 8') + p('b', 'M2 12L4 11H14L12 14H2Z'),

    // history
    pyramidPin: '<g transform="translate(0 2)">' + pyramid + '</g>' + pin,
    pyramidRed: pyramid + r('n', 1, 8, 6, 6) + r('fr', 2.5, 9.5, 3, 3),
    pyramidDark: pyramid + r('n', 1, 8, 6, 6) + r('f', 2.5, 9.5, 3, 3),
    pyramidLock: pyramid + r('s', 9, 5, 5, 4) + p('k', 'M10 5V3Q12 1 13 3V5'),
    pyramidX: pyramid + p('r', 'M3 4L13 13M13 4L3 13M8 3V13'),
    pyramid: pyramid + p('k', 'M12 2H15V5M1 12V15H4'),
    people: c('f', 7, 3, 1.8) + p('f', 'M4 5H10V10H9V15H5V10H4Z') + c('fy', 12, 7, 1.3) + p('fy', 'M10 9H14V12H13V15H11V12H10Z'),
    people2: c('fy', 6, 3, 1.8) + p('fy', 'M3 5H9V10H8V15H4V10H3Z') + c('f', 12, 7, 1.3) + p('f', 'M10 9H14V12H13V15H11V12H10Z'),

    // display
    save: p('gold', 'M1 2H15V15H1Z') + r('w', 4, 2, 8, 5) + r('s', 4, 10, 8, 5) + p('k', 'M1 2H15V15H1Z'),
    zoomAll: c('g', 8, 7, 4) + p('g', 'M6 10L3 14') + p('k', 'M2 5V2H5M11 2H14V5M14 11V14H11'),
    bulb,
    bulbBlack: bulb + r('f', 1, 1, 6, 6) + r('fy', 4, 1, 3, 3) + p('k', 'M12 2H15V5M1 12V15H4'),
    bulbs: p('s', 'M4 2Q0 4 3 8V10H6V8Q8 3 4 2') + p('gold', 'M12 2Q8 4 10 8V10H13V8Q16 3 12 2') + p('k', 'M5 12Q8 15 11 12'),
    globeGray: c('steel', 8, 8, 6) + p('k', 'M2 8H14M8 2V14M5 3Q3 8 5 13M11 3Q13 8 11 13'),
    lock: p('k', 'M5 8V4Q8 0 11 4V8') + r('s', 3, 7, 10, 7) + p('k', 'M8 9V12'),
    sphere: c('ball', 8, 8, 6.5),
    orangeP: p('fo', 'M1 6L3 2L8 3V7L14 9L12 14L8 10L2 9Z') + c('w', 11, 10, 2),
    burst: p('fo', 'M2 3L6 8L8 2L9 8L14 5L11 11L15 13L4 14Z'),
    twoBalls: p('u', 'M5 10L11 5') + c('ball', 4, 11, 3.3) + c('ball', 11, 5, 3.3),
    twoBallsD: c('w', 11, 5, 3.6) + c('ball', 6, 10, 4.4),
    twoBallsB: c('ball', 11, 5, 3.8) + c('ball', 5, 10, 4) + p('u', 'M7 9L10 7'),
    half: r('f', 3, 3, 10, 10) + p('fy', 'M4 4H12L4 12Z'),

    // alignment
    alignT: p('r', 'M1 4H15') + r('w', 1, 6, 4, 6) + r('w', 7, 6, 3, 4) + r('w', 12, 6, 3, 6),
    alignB: p('r', 'M1 13H15') + r('w', 1, 5, 4, 6) + r('w', 7, 8, 3, 3) + r('w', 12, 6, 3, 5),
    alignL: p('r', 'M3 1V15') + r('w', 5, 2, 6, 3) + r('w', 5, 7, 4, 3) + r('w', 5, 12, 6, 2),
    alignR: p('r', 'M13 1V15') + r('w', 5, 2, 6, 3) + r('w', 7, 7, 4, 3) + r('w', 5, 12, 6, 2),
    alignM: r('w', 2, 5, 3, 6) + r('w', 7, 6, 3, 4) + r('w', 12, 5, 2, 6) + p('r', 'M1 8H15'),
    alignC: r('w', 5, 2, 6, 3) + r('w', 6, 7, 4, 3) + r('w', 5, 12, 6, 2) + p('r', 'M8 1V15'),
    alignX: r('w', 6, 3, 4, 10) + p('s', 'M2 8L6 5V11ZM14 8L10 5V11Z') + p('r', 'M8 1V15M1 8H15'),
    alignD: r('w', 3, 6, 2, 6) + r('w', 7, 3, 3, 9) + r('w', 12, 6, 2, 6) + p('r', 'M2 13H14'),

    // dimensions
    dimH: p('k', 'M4 3V11M2 11H6M4 3L9 5V9M9 12H14V7') + n(4, 3, 4, 12, 13, 12),
    dimV: p('g', 'M4 2V12H13V7') + n(4, 3, 4, 12, 13, 12),
    dimR: p('k', 'M3 4H13V12M3 6V3M11 12H14') + n(3, 5, 13, 13),
    dimA: p('k', 'M6 3L3 7L8 13L14 7M12 6L14 8') + n(3, 7, 8, 13),
    dimC: p('k', 'M3 6L6 11L14 4M3 6L7 5') + n(3, 6, 7, 11, 14, 4),
    dim45: p('g', 'M3 12L7 2M3 12H8M5 6Q9 6 10 10M9 4L14 2') + t('45', 11, 15),
    dimD: p('g', 'M2 4L6 7L2 12M6 7H9') + t('Ø', 12, 9),
    dimRad: p('g', 'M2 4L6 7L2 12M6 7H9') + t('R', 12, 9),
    plusArc: p('k', 'M5 6V10M3 8H7') + p('lt', 'M8 3Q14 5 12 13'),
    dimBlue: p('b', 'M1 4L8 10L15 4V8L8 14L1 8Z') + p('w', 'M4 4H12L8 8Z'),
    textA: t('TEXT', 8, 10),
    textB: t('TEXT', 8, 13) + p('w', 'M7 5L10 2H15L13 5Z'),
    dimN: p('k', 'M3 13V8L8 6M11 4H14V9H8V4M11 5V8') + n(3, 13, 10, 13),
    dimBox: p('g', 'M5 3H14V8H5ZM5 8L2 13') + n(3, 13),
    dimPin: p('k', 'M3 13V8H13V13M8 8V5M3 11H13') + pin + n(3, 13, 13, 13),
    blob: e('g', 8, 8, 6, 4) + e('g', 8, 8, 4, 2.5) + p('g', 'M4 5L12 11'),
    hatch: c('w', 6, 6, 4) + r('s', 7, 7, 6, 6) + p('g', 'M2 5L5 2M3 9L9 3M7 12L13 7M9 14L14 9'),
    dimPen: p('k', 'M4 3V13M2 3H6M2 13H13M4 8H7') + pin + n(4, 13, 13, 13),
    dimTick: p('k', 'M4 3V13M2 3H6M2 13H6M8 9L10 12L14 6') + n(4, 13),
    cubePen: p('w', 'M2 5L7 3L13 5V11L8 14L2 12Z') + p('g', 'M2 5L8 7L13 5M8 7V14') + p('fo', 'M9 6L13 1L15 3L11 8Z'),
    listPin: p('k dash', 'M2 7H14M2 10H14M2 13H14') + p('k', 'M3 3V14') + pin,
    folder: p('gold', 'M2 5H7L8 7H13V14H2Z') + p('fy', 'M2 14L5 9H15L12 14Z') + pin,
    blackBall: c('f', 8, 8, 5.5) + c('steel', 6, 6, 1.5),
    boxA: r('w', 3, 8, 7, 6) + p('k', 'M6 8Q6 4 10 4') + t('A', 13, 6),
    tagPin: p('g', 'M3 4L7 6L12 5L14 10L8 13L3 10Z') + p('k', 'M4 2V13M2 8H8') + n(4, 4, 13, 10) + p('k', 'M9 3L12 2')
};

const svg = (name) => `<svg viewBox="0 0 16 16" aria-hidden="true">${icons[name]}</svg>`;

const gear = '<svg class="gear" viewBox="0 0 12 12" aria-hidden="true"><path fill-rule="evenodd" d="M5 1H7L7.5 2.3L9 1.8L10.2 3L9.7 4.5L11 5V7L9.7 7.5L10.2 9L9 10.2L7.5 9.7L7 11H5L4.5 9.7L3 10.2L1.8 9L2.3 7.5L1 7V5L2.3 4.5L1.8 3L3 1.8L4.5 2.3ZM6 4A2 2 0 1 0 6 8A2 2 0 1 0 6 4Z"/></svg>';

function toolButton(entry) {
    if (entry === 'more') return '<button class="tool tool-more" type="button" aria-label="更多">»</button>';
    const name = entry.replace('+', '');
    const menu = entry.endsWith('+') ? ' tool-menu' : '';
    return `<button class="tool${menu}" type="button" aria-label="${name}">${svg(name)}</button>`;
}

document.querySelectorAll('.panel').forEach((panel) => {
    const { icon, title, tools } = panel.dataset;
    panel.innerHTML = `
        <header class="panel-head">
            <div class="panel-tab">${svg(icon)}<h2>${title}</h2></div>
            <div class="panel-actions">
                <button type="button" aria-label="设置">${gear}</button>
                <button type="button" aria-label="关闭">×</button>
            </div>
        </header>
        <div class="panel-tools">${tools.split(' ').map(toolButton).join('')}</div>`;
});
```
